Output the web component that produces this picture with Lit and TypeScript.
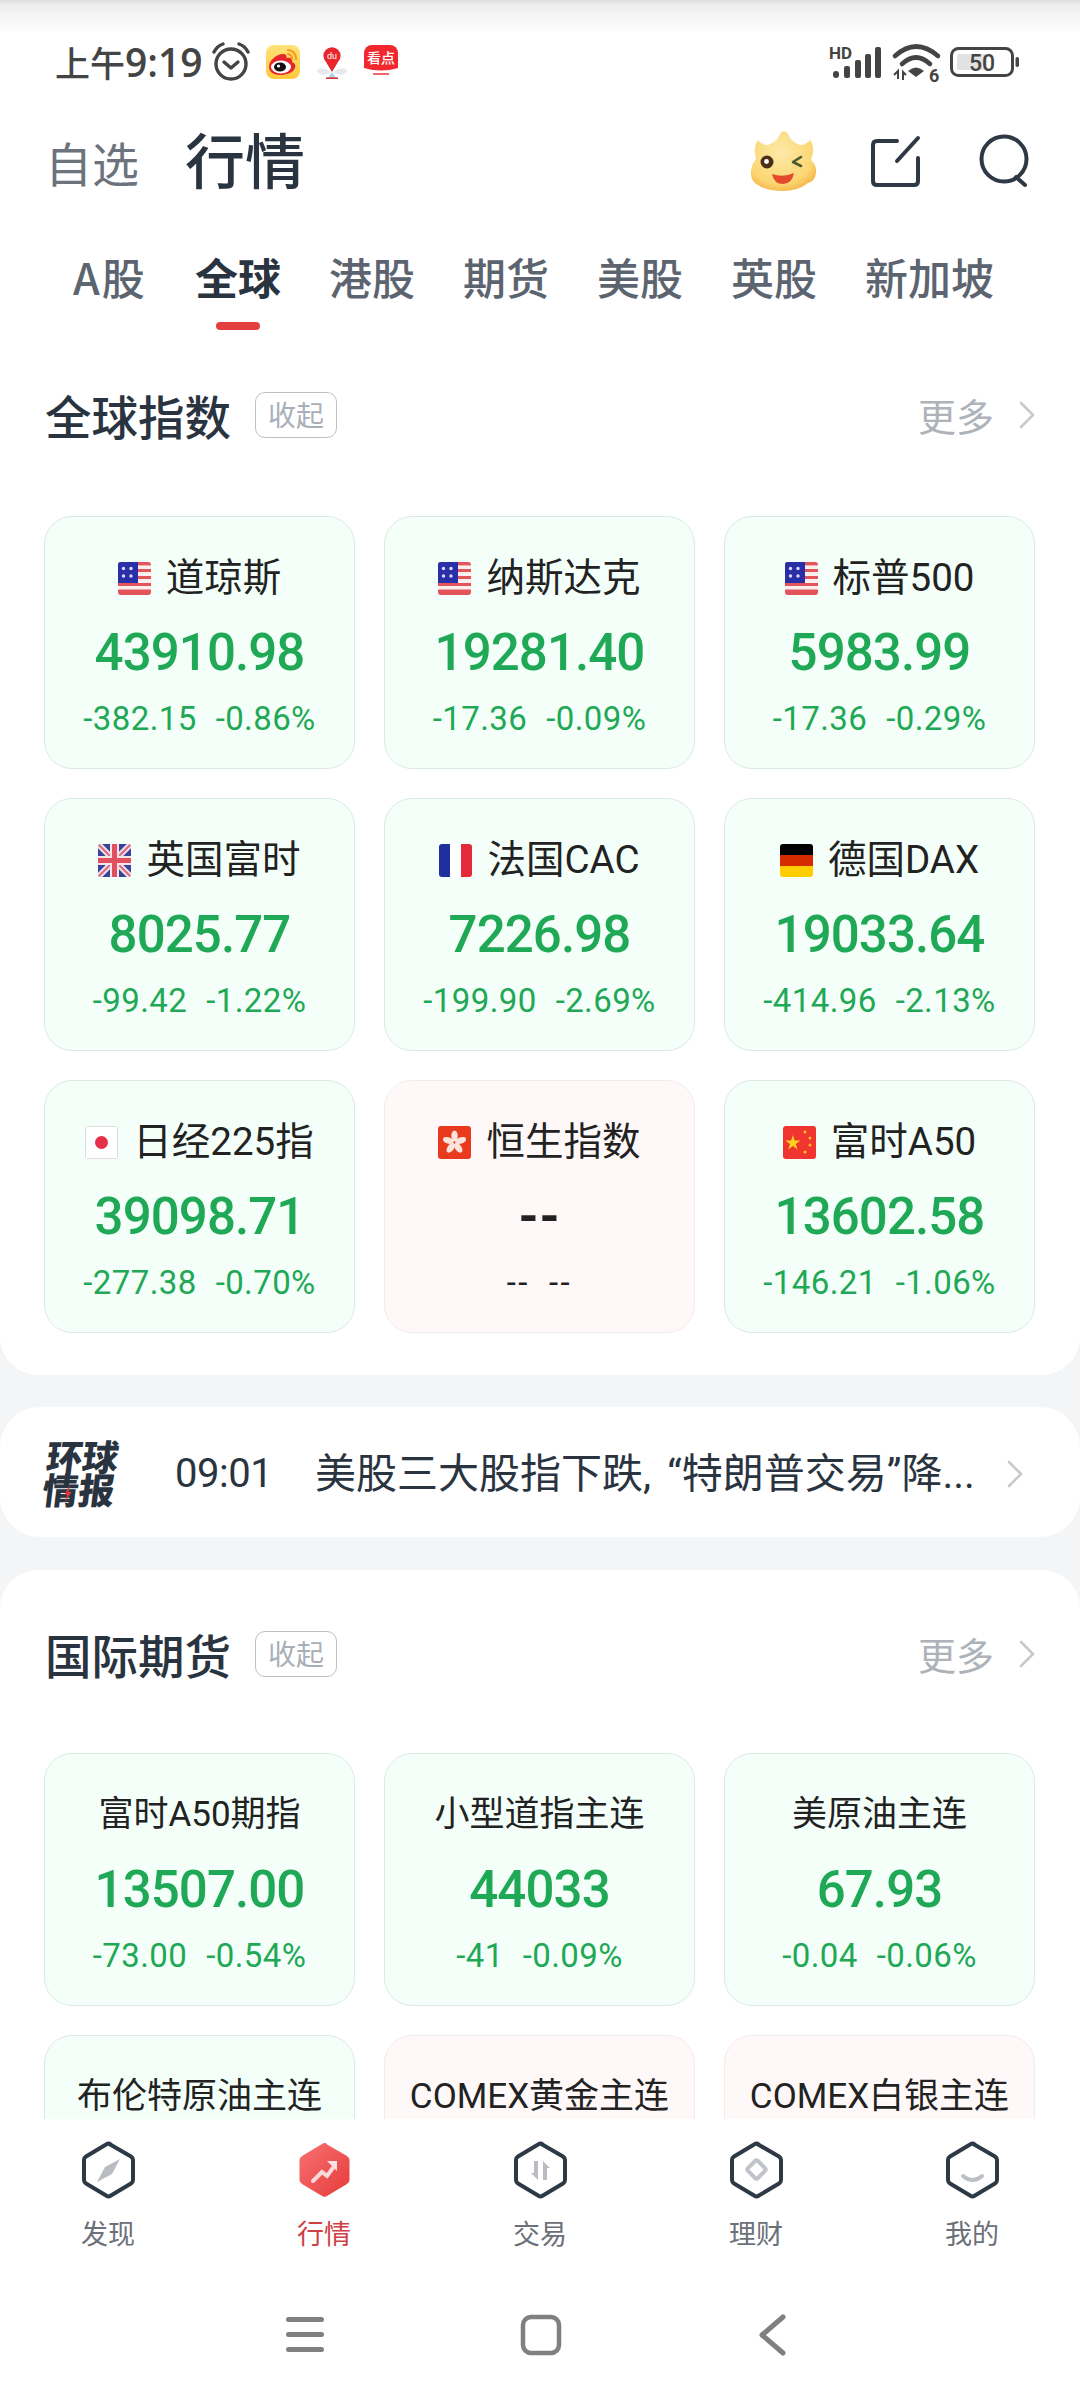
import { LitElement, html, css, svg } from "lit";
import { customElement } from "lit/decorators.js";

type Flag = "us" | "uk" | "fr" | "de" | "jp" | "hk" | "cn" | "";
interface Quote { name: string; flag: Flag; value?: string; diff?: string; pct?: string; flat?: boolean }

const INDICES: Quote[] = [
  { name: "道琼斯", flag: "us", value: "43910.98", diff: "-382.15", pct: "-0.86%" },
  { name: "纳斯达克", flag: "us", value: "19281.40", diff: "-17.36", pct: "-0.09%" },
  { name: "标普500", flag: "us", value: "5983.99", diff: "-17.36", pct: "-0.29%" },
  { name: "英国富时", flag: "uk", value: "8025.77", diff: "-99.42", pct: "-1.22%" },
  { name: "法国CAC", flag: "fr", value: "7226.98", diff: "-199.90", pct: "-2.69%" },
  { name: "德国DAX", flag: "de", value: "19033.64", diff: "-414.96", pct: "-2.13%" },
  { name: "日经225指", flag: "jp", value: "39098.71", diff: "-277.38", pct: "-0.70%" },
  { name: "恒生指数", flag: "hk", value: "--", diff: "--", pct: "--", flat: true },
  { name: "富时A50", flag: "cn", value: "13602.58", diff: "-146.21", pct: "-1.06%" },
];

// The last row sits under the tab bar, so only its names are ever on screen.
const FUTURES: Quote[] = [
  { name: "富时A50期指", flag: "", value: "13507.00", diff: "-73.00", pct: "-0.54%" },
  { name: "小型道指主连", flag: "", value: "44033", diff: "-41", pct: "-0.09%" },
  { name: "美原油主连", flag: "", value: "67.93", diff: "-0.04", pct: "-0.06%" },
  { name: "布伦特原油主连", flag: "" },
  { name: "COMEX黄金主连", flag: "", flat: true },
  { name: "COMEX白银主连", flag: "", flat: true },
];

function flagArt(f: Flag) {
  switch (f) {
    case "us":
      return svg`<rect width="33" height="33" fill="#fbeeee"/>
        <g fill="#e2555a"><rect width="33" height="3.4"/><rect y="7" width="33" height="3"/><rect y="14" width="33" height="3"/><rect y="21" width="33" height="3"/><rect y="27.5" width="33" height="5.5"/></g>
        <rect width="20" height="21" fill="#2a2fa8"/>
        <g fill="#d8dcf5"><circle cx="5.5" cy="6.5" r="1.7"/><circle cx="13" cy="6.5" r="1.7"/><circle cx="5.5" cy="14" r="1.7"/><circle cx="13" cy="14" r="1.7"/></g>`;
    case "uk":
      return svg`<rect width="33" height="33" fill="#39439a"/>
        <path d="M0 0L33 33M33 0L0 33" stroke="#f0dfe8" stroke-width="6"/>
        <path d="M0 0L33 33M33 0L0 33" stroke="#dd6a7c" stroke-width="2"/>
        <path d="M16.5 0V33M0 16.5H33" stroke="#f6e4ea" stroke-width="9"/>
        <path d="M16.5 0V33M0 16.5H33" stroke="#e0505f" stroke-width="5"/>`;
    case "fr":
      return svg`<rect width="11" height="33" fill="#1f2f9e"/><rect x="11" width="11" height="33" fill="#fff"/><rect x="22" width="11" height="33" fill="#e5293a"/>`;
    case "de":
      return svg`<rect width="33" height="11" fill="#000"/><rect y="11" width="33" height="11" fill="#d62a00"/><rect y="22" width="33" height="11" fill="#ffce00"/>`;
    case "jp":
      return svg`<rect x=".5" y=".5" width="32" height="32" fill="#fff" stroke="#dcdcdc"/><circle cx="16.5" cy="16.5" r="6.5" fill="#e5304a"/>`;
    case "hk":
      return svg`<rect width="33" height="33" fill="#ea3a1e"/>
        <g fill="#fbe4dc">${[0, 72, 144, 216, 288].map(
          (a) => svg`<ellipse cx="16.5" cy="10" rx="3.2" ry="5.6" transform="rotate(${a} 16.5 16.5)"/>`
        )}</g>`;
    case "cn":
      return svg`<rect width="33" height="33" fill="#f0342f"/>
        <path d="M10 9.5l2 6.2h6.5l-5.3 3.8 2 6.2-5.2-3.8-5.2 3.8 2-6.2-5.3-3.8H8z" transform="translate(0 -.5) scale(.9) translate(1 1)" fill="#ffd21f"/>
        <g fill="#ffc21f"><circle cx="22" cy="6" r="1.5"/><circle cx="27" cy="12" r="1.5"/><circle cx="27" cy="19" r="1.5"/><circle cx="22" cy="26" r="1.5"/></g>`;
    default:
      return svg``;
  }
}

const HEX = "M26.5 2.5 L49 15.5 Q51 16.8 51 19 V39 Q51 41.2 49 42.5 L28.5 54.8 Q26.5 56 24.5 54.8 L4 42.5 Q2 41.2 2 39 V19 Q2 16.8 4 15.5 L24.5 3.2 Q26.5 2 28.5 3.2 Z";

function navGlyph(i: number) {
  switch (i) {
    case 0:
      return svg`<path d="M38 18 L30 33 L15 41 L23 26 Z" fill="#b9bcc2"/>`;
    case 1:
      return svg`<path d="M15 40 L24 31 L29 35 L37 24" fill="none" stroke="#fbd9d9" stroke-width="4" stroke-linecap="round"/><path d="M29 20 H39 V30 Z" fill="#fbe3e3"/>`;
    case 2:
      return svg`<path d="M24 20 V39 L17 32 H20 V20 Z M29 39 V20 L36 27 H33 V39 Z" fill="#b9bcc2"/>`;
    case 3:
      return svg`<rect x="19.5" y="21.5" width="14" height="14" rx="2" transform="rotate(45 26.5 28.5)" fill="none" stroke="#c0c3c9" stroke-width="4"/>`;
    default:
      return svg`<path d="M17 35 Q26.5 43 36 35" fill="none" stroke="#bcbfc6" stroke-width="4" stroke-linecap="round"/>`;
  }
}

@customElement("app-root")
export class AppRoot extends LitElement {
  static styles = css`
    :host { display: block; width: 1080px; height: 2400px; overflow: hidden; background: #f4f5f7;
      font-family: Roboto, "Noto Sans CJK SC", sans-serif; color: #2a3440; }
    .page { width: 1080px; height: 2400px; display: flex; flex-direction: column; }

    .top { background: #fff; flex: none; border-radius: 0 0 38px 38px; height: 1375px; overflow: hidden; }
    .status { height: 94px; box-sizing: border-box; padding: 44px 60px 0 55px; display: flex; align-items: flex-start;
      background: linear-gradient(#dcdcdc 0, #ececec 4px, #f4f4f4 14px, #fff 34px); }
    .time { font: 500 35px/36px "Noto Sans CJK SC", sans-serif; color: #444; white-space: nowrap; width: 156px; }
    .time b { font: 600 39px/36px "Open Sans", sans-serif; }
    .alarm { width: 40px; height: 40px; margin: -2px 0 0 0; flex: none; }
    .app { width: 34px; height: 34px; flex: none; margin: 1px 0 0 15px; border-radius: 8px; overflow: hidden; display: block; }
    .spacer { flex: 1; }
    .sig { width: 54px; height: 36px; flex: none; margin: 1px 0 0 5px; overflow: visible; }
    .wifi { width: 50px; height: 40px; flex: none; margin-left: 8px; overflow: visible; }
    .batt { width: 70px; height: 30px; flex: none; margin: 3px 0 0 8px; }

    .head { height: 96px; display: flex; align-items: center; padding: 0 48px 0 45px; gap: 46px; box-sizing: border-box; margin-top: 16px; }
    .head .off { font: 400 47px/60px "Noto Sans CJK SC", sans-serif; color: #6c737d; margin-top: 8px; }
    .head .on { font: 500 60px/70px "Noto Sans CJK SC", sans-serif; color: #2a3440; }
    .tools { margin-left: auto; display: flex; align-items: center; margin-top: 5px; }
    .mascot { margin-right: 52px; display: block; }
    .edit { margin-right: 56px; display: block; }

    .tabs { display: flex; gap: 48px; padding: 0 0 0 73px; height: 70px; margin-top: 35px; align-items: center; }
    .tab { font: 500 43px/60px "Noto Sans CJK SC", sans-serif; color: #5c6470; position: relative; white-space: nowrap; }
    .tab:first-child { min-width: 74px; letter-spacing: 2px; }
    .tab.on { font-weight: 700; color: #2a3440; }
    .tab.on::after { content: ""; position: absolute; left: 21px; right: 21px; bottom: -24px; height: 8px; border-radius: 4px; background: #e33f3f; }
    .gap-a { height: 74px; }
    .gap-b { height: 71px; }

    .sec-head { display: flex; align-items: center; padding: 0 44px 0 45px; height: 60px; }
    .sec-title { font: 500 46.5px/60px "Noto Sans CJK SC", sans-serif; color: #2a3440; }
    .chip { margin-left: 24px; width: 82px; height: 46px; box-sizing: border-box; border: 1.5px solid #bcc1c8; border-radius: 10px;
      font: 400 28px/43px "Noto Sans CJK SC", sans-serif; color: #a9afb8; text-align: center; }
    .more { margin-left: auto; font: 400 38px/60px "Noto Sans CJK SC", sans-serif; color: #aeb3ba; display: flex; align-items: center; gap: 24px; }
    .more svg { width: 18px; height: 30px; }

    .grid { display: grid; grid-template-columns: repeat(3, 311px); column-gap: 29px; row-gap: 29px; padding: 0 45px 0 44px; }
    .card { height: 253px; box-sizing: border-box; border-radius: 28px; border: 1.5px solid #dbeae3; background: #f4fff9;
      display: flex; flex-direction: column; align-items: center; color: #1fa855; }
    .card.flat { background: #fff8f8; border-color: #f7e9e9; color: #222; }
    .name { margin-top: 42px; height: 38px; display: flex; align-items: center; gap: 15px; color: #222; font: 400 38.5px/38px Roboto, "Noto Sans CJK SC", sans-serif; white-space: nowrap; }
    .flag { width: 33px; height: 33px; border-radius: 3px; display: block; flex: none; }
    .value { margin-top: 28px; font: 500 51px/56px Roboto, sans-serif; letter-spacing: -0.9px; }
    .flat .value { font-weight: 700; letter-spacing: 1px; }
    .sub { margin-top: 18px; font: 400 33px/40px Roboto, sans-serif; letter-spacing: .4px; display: flex; gap: 19px; white-space: nowrap; }
    .flat .sub { letter-spacing: 2.5px; }

    .news { margin-top: 32px; height: 130px; flex: none; background: #fff; border-radius: 40px; display: flex; align-items: center; padding: 0 56px 0 45px; box-sizing: border-box; }
    .logo { width: 72px; position: relative; font: 900 36px/33px "Noto Sans CJK SC", sans-serif; color: #2a3440; flex: none; transform: skewX(-7deg); white-space: nowrap; }
    .bolt { position: absolute; left: 21px; top: 46px; width: 9px; height: 18px; display: block; }
    .ntime { margin: 4px 0 0 58px; font: 400 40px/50px Roboto, sans-serif; color: #2a3440; flex: none; letter-spacing: -.5px; }
    .ntext { margin: 4px 0 0 43px; font: 400 41px/50px Roboto, "Noto Sans CJK SC", sans-serif; color: #2a3440; flex: 1; white-space: nowrap; word-spacing: 6px; }
    .news svg.chev { width: 18px; height: 30px; flex: none; margin-top: 4px; }

    .lower { margin-top: 33px; flex: 1; min-height: 0; background: #fff; border-radius: 38px 38px 0 0; overflow: hidden; display: flex; flex-direction: column; }
    .lower .sec-head { margin-top: 54px; }
    .lower .grid { margin-top: 69px; flex: 1; min-height: 0; overflow: hidden; align-content: start; }
    .lower .name { font-size: 35px; }

    .tabbar { flex: none; height: 281px; background: #fff; }
    .navs { display: grid; grid-template-columns: repeat(5, 216px); padding-top: 22px; }
    .nav { display: flex; flex-direction: column; align-items: center; font: 400 27px/36px "Noto Sans CJK SC", sans-serif; color: #6b7079; }
    .nav.on { color: #cf3f45; }
    .nav svg { width: 53px; height: 58px; display: block; margin-bottom: 16px; }
    .sys { display: flex; justify-content: space-between; align-items: center; margin-top: 63px; padding: 0 282px 0 284px; height: 44px; }
    .sys svg { display: block; }
  `;

  private card(q: Quote) {
    return html`<div class="card ${q.flat ? "flat" : ""}">
      <div class="name">
        ${q.flag ? html`<svg class="flag" viewBox="0 0 33 33">${flagArt(q.flag)}</svg>` : ""}
        <span>${q.name}</span>
      </div>
      ${q.value
        ? html`<div class="value">${q.value}</div>
            <div class="sub"><span>${q.diff}</span><span>${q.pct}</span></div>`
        : ""}
    </div>`;
  }

  private section(title: string) {
    return html`<div class="sec-head">
      <span class="sec-title">${title}</span><span class="chip">收起</span>
      <span class="more">更多${this.chevron()}</span>
    </div>`;
  }

  private chevron() {
    return html`<svg class="chev" viewBox="0 0 18 30"><path d="M3 3 L15 15 L3 27" fill="none" stroke="#c6c9ce" stroke-width="2.6" stroke-linecap="round" stroke-linejoin="round"/></svg>`;
  }

  private statusBar() {
    return html`<div class="status">
      <span class="time">上午<b>9:19</b></span>
      <svg class="alarm" viewBox="0 0 40 40">
        <circle cx="20" cy="22" r="15" fill="none" stroke="#444" stroke-width="3.4"/>
        <path d="M13 20 L20 26 L27 20" fill="none" stroke="#444" stroke-width="3.4" stroke-linecap="round" stroke-linejoin="round"/>
        <path d="M3 10 Q6 4 12 2 M37 10 Q34 4 28 2" fill="none" stroke="#444" stroke-width="3.4" stroke-linecap="round"/>
      </svg>
      <svg class="app" viewBox="0 0 34 34">
        <defs><linearGradient id="wb" x1="0" y1="0" x2="0" y2="1"><stop offset="0" stop-color="#ffe27a"/><stop offset="1" stop-color="#ffc93a"/></linearGradient></defs>
        <rect width="34" height="34" fill="url(#wb)"/>
        <path d="M3 22 C3 15 11 9 17 9 C20 9 21 11 20.5 13 C25 12 27 14 26 17 C29 18 30 20 29 23 C27 28 20 30 14 30 C8 30 3 27 3 22Z" fill="#e6262d"/>
        <ellipse cx="15" cy="22" rx="10" ry="6.5" fill="#fff"/>
        <ellipse cx="14" cy="22" rx="6" ry="4.5" fill="#111"/>
        <circle cx="12.5" cy="21" r="1.6" fill="#fff"/>
        <path d="M22 5 Q30 6 30 14 M22 9 Q26 10 26 14" fill="none" stroke="#f59a1e" stroke-width="2.2" stroke-linecap="round"/>
      </svg>
      <svg class="app" viewBox="0 0 34 34">
        <rect width="34" height="34" fill="#fff"/>
        <path d="M2 25 Q10 21 16 28 L8 30 Q3 29 2 25Z M32 25 Q24 21 18 28 L26 30 Q31 29 32 25Z" fill="#e6e8ea"/>
        <path d="M17 27 L11 17 A8.6 8.6 0 1 1 23 17 Z" fill="#e8262c"/>
        <text x="17" y="14" font-size="9" fill="#fff" text-anchor="middle" font-family="Roboto, sans-serif">du</text>
        <path d="M13 33 L17 27 L21 33 Z" fill="#a9d2e8"/><rect x="11" y="32.4" width="12" height="1.6" fill="#d33"/>
      </svg>
      <svg class="app" viewBox="0 0 34 34">
        <rect width="34" height="34" fill="#fff"/>
        <path d="M0 0H34V23Q17 28 0 23Z" fill="#f2282e"/>
        <text x="17" y="18" font-size="14" font-weight="500" fill="#fff" text-anchor="middle" font-family="'Noto Sans CJK SC', sans-serif">看点</text>
        <rect x="9" y="28" width="16" height="2" fill="#e66"/>
      </svg>
      <span class="spacer"></span>
      <svg class="sig" viewBox="0 0 54 36">
        <text x="-1" y="14" font-size="17" font-weight="700" fill="#444" font-family="Roboto, sans-serif">HD</text>
        <g fill="#444"><rect x="3" y="26" width="6" height="7" rx="3"/><rect x="14" y="21" width="6" height="12" rx="2"/><rect x="25" y="15" width="6" height="18" rx="2"/><rect x="35" y="9" width="6" height="24" rx="2"/><rect x="45" y="2" width="6" height="31" rx="2"/></g>
      </svg>
      <svg class="wifi" viewBox="0 0 50 40">
        <g fill="none" stroke="#444" stroke-width="4.6" stroke-linecap="round"><path d="M3 12 Q24 -7 46 12"/><path d="M10 20 Q24 7 38 20"/></g>
        <path d="M16 27 Q24 20 32 27 L24 33Z" fill="#444"/>
        <path d="M2 31 L6 27 V35 M11 36 V28 L14 31" fill="none" stroke="#444" stroke-width="2"/>
        <text x="37" y="38" font-size="18" font-weight="700" fill="#444" font-family="Roboto, sans-serif">6</text>
      </svg>
      <svg class="batt" viewBox="0 0 70 30">
        <rect x="1.5" y="1.5" width="61" height="27" rx="7" fill="none" stroke="#444" stroke-width="3"/>
        <rect x="7" y="7" width="30" height="16" rx="2" fill="#e2e2e2"/>
        <text x="32" y="23.5" font-size="23" font-weight="500" fill="#444" text-anchor="middle" font-family="Roboto, sans-serif">50</text>
        <rect x="65.5" y="10" width="3.5" height="10" rx="1.7" fill="#444"/>
      </svg>
    </div>`;
  }

  private mascot() {
    return html`<svg class="mascot" width="68" height="60" viewBox="0 0 68 60">
      <defs><radialGradient id="mc" cx=".45" cy=".35" r=".75"><stop offset="0" stop-color="#fdeaa8"/><stop offset=".7" stop-color="#fbd673"/><stop offset="1" stop-color="#f5a93a"/></radialGradient></defs>
      <path d="M5 22 Q4 14 8 9 Q12 14 18 14 Q24 12 28 7 Q31 0 34 0 Q38 1 40 7 Q44 12 50 14 Q56 14 60 9 Q64 14 63 22 Q62 26 61 29 Q67 34 66 42 Q65 50 58 52 Q48 60 33 60 Q16 60 8 54 Q0 50 1 40 Q2 32 6 28 Z" fill="url(#mc)"/>
      <circle cx="17" cy="31" r="6.5" fill="#4c2d17"/><circle cx="16.5" cy="30.5" r="2.4" fill="#fff"/>
      <path d="M51 26 L43 31 L51 35" fill="none" stroke="#4d5a2c" stroke-width="2.6" stroke-linecap="round" stroke-linejoin="round"/>
      <path d="M22 43 Q33 47 44 42 Q42 53 33 53 Q24 53 22 43Z" fill="#e5492e"/>
    </svg>`;
  }

  render() {
    const tabs = ["A股", "全球", "港股", "期货", "美股", "英股", "新加坡"];
    const navs = ["发现", "行情", "交易", "理财", "我的"];
    return html`<div class="page">
      <div class="top">
        ${this.statusBar()}
        <div class="head">
          <span class="off">自选</span><span class="on">行情</span>
          <div class="tools">
            ${this.mascot()}
            <svg class="edit" width="52" height="52" viewBox="0 0 52 52">
              <path d="M27 6 H7 Q3 6 3 10 V46 Q3 50 7 50 H44 Q48 50 48 46 V23 M27 26 L48 3" fill="none" stroke="#2e3945" stroke-width="4" stroke-linecap="round" stroke-linejoin="round"/>
            </svg>
            <svg width="54" height="54" viewBox="0 0 54 54">
              <circle cx="26" cy="25" r="22.5" fill="none" stroke="#2e3945" stroke-width="4"/>
              <path d="M38 43 L47 51" stroke="#2e3945" stroke-width="4" stroke-linecap="round"/>
            </svg>
          </div>
        </div>
        <div class="tabs">${tabs.map((t) => html`<span class="tab ${t === "全球" ? "on" : ""}">${t}</span>`)}</div>
        <div class="gap-a"></div>
        ${this.section("全球指数")}
        <div class="gap-b"></div>
        <div class="grid">${INDICES.map((q) => this.card(q))}</div>
      </div>
      <div class="news">
        <div class="logo">环球<br />情报
          <svg class="bolt" viewBox="0 0 11 24"><path d="M7 0 L1 13 H5 L3 24 L10 9 H6 Z" fill="#e5383b"/></svg>
        </div>
        <span class="ntime">09:01</span>
        <span class="ntext">美股三大股指下跌, “特朗普交易”降...</span>
        ${this.chevron()}
      </div>
      <div class="lower">
        ${this.section("国际期货")}
        <div class="grid">${FUTURES.map((q) => this.card(q))}</div>
        <div class="tabbar">
          <div class="navs">
            ${navs.map((n, i) => html`<div class="nav ${i === 1 ? "on" : ""}">
              <svg viewBox="0 0 53 58">
                <defs><linearGradient id="hexred" x1="0" y1="0" x2="1" y2="1"><stop offset="0" stop-color="#f87070"/><stop offset="1" stop-color="#e63c3c"/></linearGradient></defs>
                ${i === 1
                  ? svg`<path d="${HEX}" fill="url(#hexred)" stroke="url(#hexred)" stroke-width="1"/>`
                  : svg`<path d="${HEX}" fill="none" stroke="#2e3945" stroke-width="4" stroke-linejoin="round"/>`}
                ${navGlyph(i)}
              </svg>
              ${n}
            </div>`)}
          </div>
          <div class="sys">
            <svg width="42" height="44" viewBox="0 0 42 44"><g fill="#808080"><rect x="2" y="3" width="38" height="5" rx="2.5"/><rect x="2" y="18" width="38" height="5" rx="2.5"/><rect x="2" y="33" width="38" height="5" rx="2.5"/></g></svg>
            <svg width="42" height="44" viewBox="0 0 42 44"><rect x="3" y="3" width="36" height="36" rx="8" fill="none" stroke="#808080" stroke-width="4.5"/></svg>
            <svg width="42" height="44" viewBox="0 0 42 44"><path d="M27 3 L6 21 L27 39" fill="none" stroke="#808080" stroke-width="5" stroke-linecap="round" stroke-linejoin="round"/></svg>
          </div>
        </div>
      </div>
    </div>`;
  }
}
